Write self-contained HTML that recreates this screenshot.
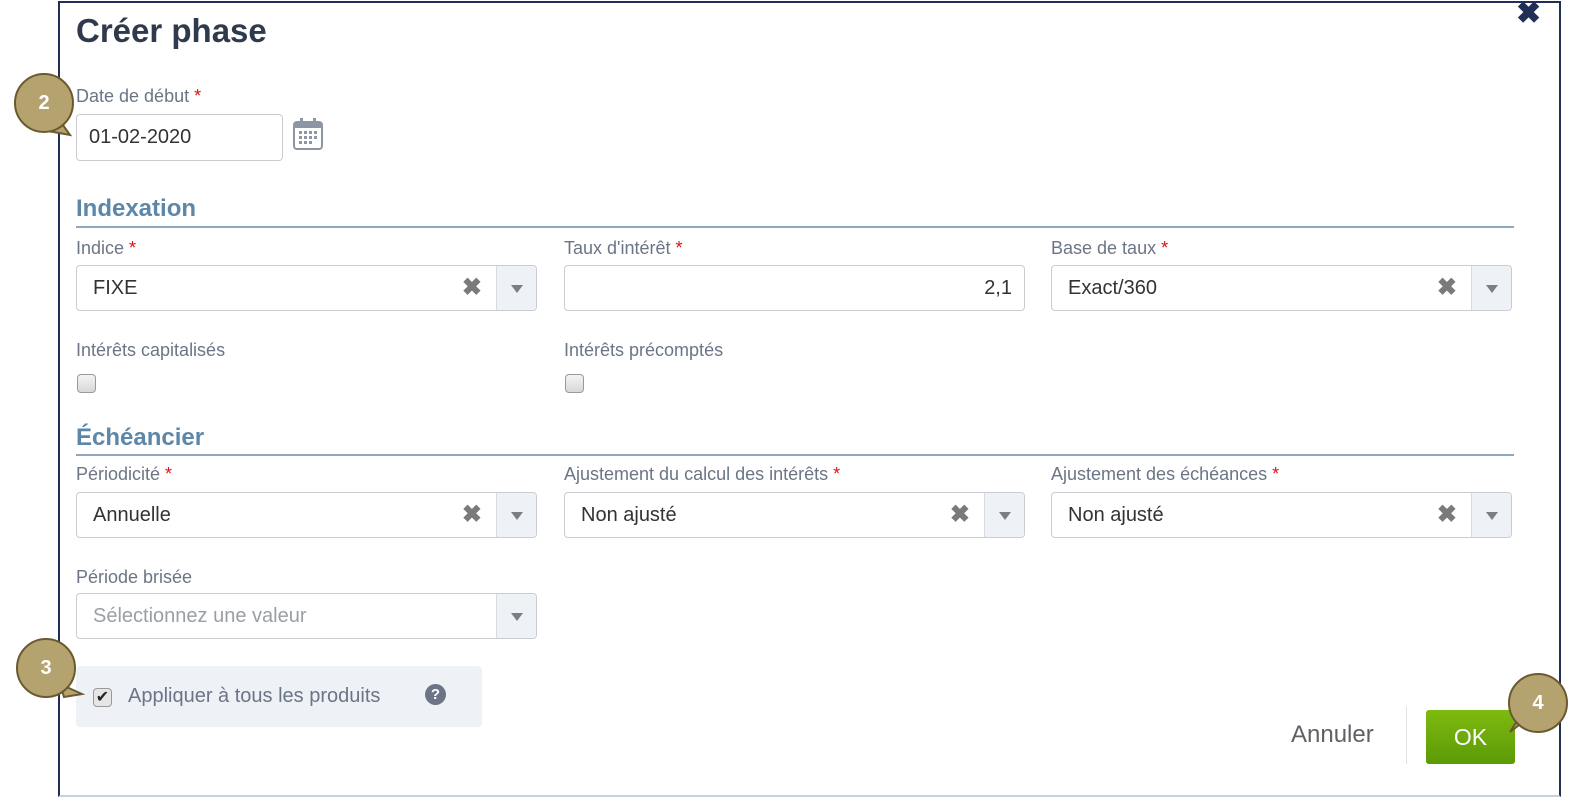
<!DOCTYPE html>
<html><head><meta charset="utf-8"><style>
*{box-sizing:border-box}
body{margin:0;width:1595px;height:797px;background:#fff;font-family:"Liberation Sans",Arial,sans-serif;position:relative;overflow:hidden}
.a{position:absolute}
.dlg{left:58px;top:1px;width:1503px;height:796px;border:2px solid #1f2f55;border-bottom:2px solid #c9d1da;border-top-width:2px}
.lbl{font-size:18px;color:#6b7585}
.req{color:#e01010}
.sec{font-size:24px;font-weight:bold;color:#5d87a8}
.hr{height:2px;background:#8fa8be}
.box{border:1px solid #c9ccd1;border-radius:4px;background:#fff;height:46px;font-size:20px;color:#333;padding-left:16px;line-height:44px}
.dd{position:absolute;right:0;top:0;width:40px;height:44px;background:#eef1f5;border-left:1px solid #d7dbe0;border-radius:0 4px 4px 0}
.dd:after{content:"";position:absolute;left:14px;top:19px;border-left:6px solid transparent;border-right:6px solid transparent;border-top:8px solid #7a7f87}
.x{position:absolute;right:54px;top:0;font-size:24px;color:#7a7a7a;font-weight:bold}
.cb{width:19px;height:19px;border:1px solid #999;border-radius:4px;background:linear-gradient(#f4f4f4,#d8d8d8)}
.cl{width:60px;height:60px;border-radius:50%;background:#b5a36f;border:2px solid #6b5a30;color:#fff;font-weight:bold;font-size:20px;text-align:center;line-height:56px}
</style></head><body>
<div class="a dlg"></div>
<div class="a" style="left:1516px;top:0;font-size:30px;font-weight:bold;color:#1f2f55;line-height:28px">✖</div>
<div class="a" style="left:76px;top:12px;font-size:33px;font-weight:bold;color:#2f3a4d">Créer phase</div>

<div class="a lbl" style="left:76px;top:86px">Date de début <span class="req">*</span></div>
<div class="a box" style="left:76px;top:114px;width:207px;height:47px;padding-left:12px">01-02-2020</div>
<svg class="a" style="left:292px;top:117px" width="32" height="34" viewBox="0 0 32 34"><rect x="2" y="5" width="28" height="27" rx="3" fill="none" stroke="#8d96a3" stroke-width="2"/><rect x="2" y="5" width="28" height="6" fill="#8d96a3"/><rect x="8" y="1" width="3" height="7" fill="#8d96a3"/><rect x="21" y="1" width="3" height="7" fill="#8d96a3"/><g fill="#8d96a3"><rect x="7" y="14" width="3" height="3"/><rect x="12" y="14" width="3" height="3"/><rect x="17" y="14" width="3" height="3"/><rect x="22" y="14" width="3" height="3"/><rect x="7" y="19" width="3" height="3"/><rect x="12" y="19" width="3" height="3"/><rect x="17" y="19" width="3" height="3"/><rect x="22" y="19" width="3" height="3"/><rect x="7" y="24" width="3" height="3"/><rect x="12" y="24" width="3" height="3"/><rect x="17" y="24" width="3" height="3"/></g></svg>

<div class="a sec" style="left:76px;top:195px">Indexation</div>
<div class="a hr" style="left:76px;top:226px;width:1438px"></div>
<div class="a lbl" style="left:76px;top:238px">Indice <span class="req">*</span></div>
<div class="a lbl" style="left:564px;top:238px">Taux d'intérêt <span class="req">*</span></div>
<div class="a lbl" style="left:1051px;top:238px">Base de taux <span class="req">*</span></div>
<div class="a box" style="left:76px;top:265px;width:461px">FIXE<span class="x">✖</span><span class="dd"></span></div>
<div class="a box" style="left:564px;top:265px;width:461px;text-align:right;padding-right:12px">2,1</div>
<div class="a box" style="left:1051px;top:265px;width:461px">Exact/360<span class="x">✖</span><span class="dd"></span></div>
<div class="a lbl" style="left:76px;top:340px">Intérêts capitalisés</div>
<div class="a lbl" style="left:564px;top:340px">Intérêts précomptés</div>
<div class="a cb" style="left:77px;top:374px"></div>
<div class="a cb" style="left:565px;top:374px"></div>

<div class="a sec" style="left:76px;top:424px">Échéancier</div>
<div class="a hr" style="left:76px;top:454px;width:1438px"></div>
<div class="a lbl" style="left:76px;top:464px">Périodicité <span class="req">*</span></div>
<div class="a lbl" style="left:564px;top:464px">Ajustement du calcul des intérêts <span class="req">*</span></div>
<div class="a lbl" style="left:1051px;top:464px">Ajustement des échéances <span class="req">*</span></div>
<div class="a box" style="left:76px;top:492px;width:461px">Annuelle<span class="x">✖</span><span class="dd"></span></div>
<div class="a box" style="left:564px;top:492px;width:461px">Non ajusté<span class="x">✖</span><span class="dd"></span></div>
<div class="a box" style="left:1051px;top:492px;width:461px">Non ajusté<span class="x">✖</span><span class="dd"></span></div>
<div class="a lbl" style="left:76px;top:567px">Période brisée</div>
<div class="a box" style="left:76px;top:593px;width:461px;color:#9a9ea5">Sélectionnez une valeur<span class="dd"></span></div>

<div class="a" style="left:76px;top:666px;width:406px;height:61px;background:#eef1f6;border-radius:4px"></div>
<div class="a cb" style="left:93px;top:688px;background:#e6e6e6;font-size:16px;line-height:17px;text-align:center;color:#222">✔</div>
<div class="a" style="left:128px;top:685px;font-size:20px;color:#6b7585">Appliquer à tous les produits</div>
<div class="a" style="left:425px;top:684px;width:21px;height:21px;border-radius:50%;background:#6b7585;color:#fff;font-weight:bold;font-size:15px;text-align:center;line-height:21px">?</div>

<div class="a" style="left:1291px;top:721px;font-size:24px;color:#5f6166">Annuler</div>
<div class="a" style="left:1406px;top:706px;width:1px;height:58px;background:#e3e3e3"></div>
<div class="a" style="left:1426px;top:710px;width:89px;height:54px;border-radius:3px;background:linear-gradient(#7fba10,#5c9a06);color:#fff;font-size:23px;text-align:center;line-height:54px">OK</div>

<svg class="a" style="left:0;top:0" width="1595" height="797">
<g fill="#b5a36f" stroke="#6b5a30" stroke-width="2">
<path d="M58 118 L70 135 L48 131 Z"/>
<path d="M60 684 L82 694 L64 697 Z"/>
<path d="M1527 719 L1510 732 L1522 713 Z"/>
</g></svg>
<div class="a cl" style="left:14px;top:73px">2</div>
<div class="a cl" style="left:16px;top:638px">3</div>
<div class="a cl" style="left:1508px;top:673px">4</div>
</body></html>
